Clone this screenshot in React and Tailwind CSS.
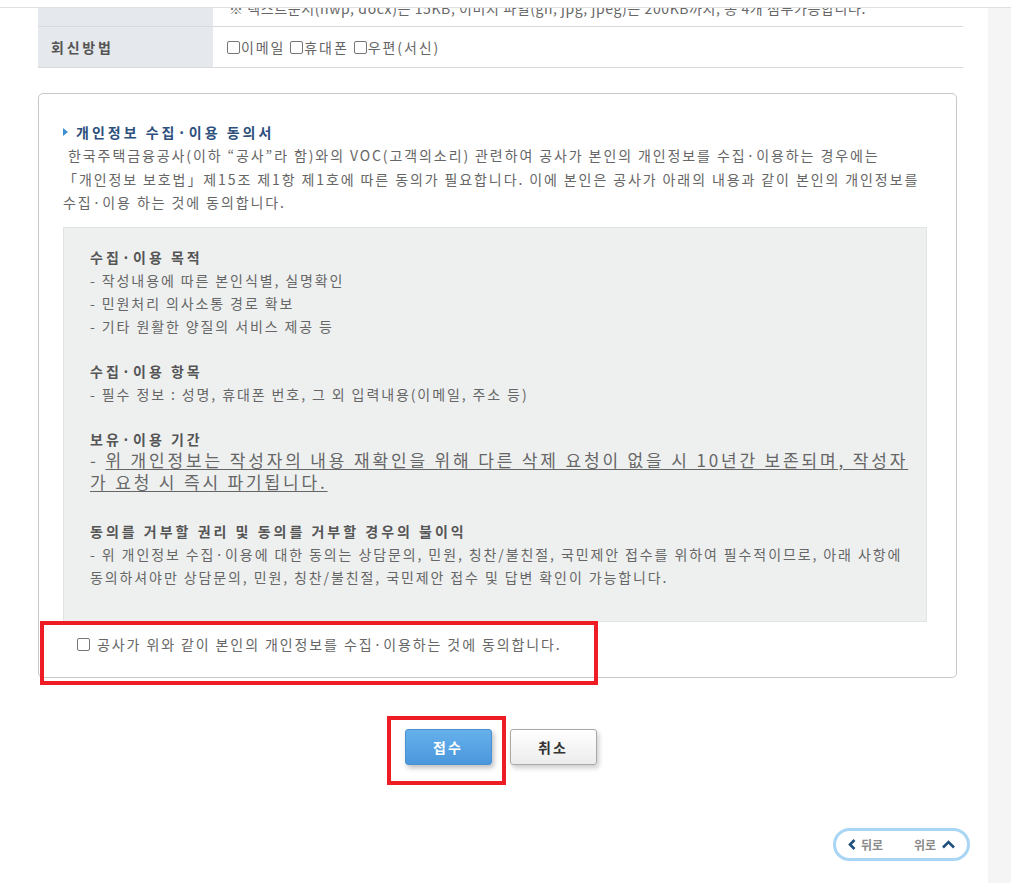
const Box = () => (
  <span className="inline-block h-[13px] w-[13px] shrink-0 rounded-[2px] border border-[#767676] bg-white" />
);

const SECTIONS = [
  {
    title: "수집·이용 목적",
    lines: ["- 작성내용에 따른 본인식별, 실명확인", "- 민원처리 의사소통 경로 확보", "- 기타 원활한 양질의 서비스 제공 등"],
  },
  {
    title: "수집·이용 항목",
    lines: ["- 필수 정보 : 성명, 휴대폰 번호, 그 외 입력내용(이메일, 주소 등)"],
  },
];

export default function App() {
  return (
    <div className="relative h-[883px] w-[1011px] overflow-hidden bg-white font-['Noto_Sans_CJK_KR','Noto_Sans',sans-serif] text-[14px] tracking-[1.9px] text-[#666]">
      <div className="h-[8px] border-b border-[#e0e0e0]" />
      <div className="flex h-[875px]">
        <main className="min-w-0 flex-1 pl-[38px] pr-[25px]">
          {/* ── form table (tail) ─────────────────────── */}
          <div className="flex h-[19px] overflow-hidden border-b border-[#d9d9d9]">
            <div className="w-[175px] shrink-0 bg-[#e5e8ec]" />
            <div className="-mt-[12px] min-w-0 whitespace-nowrap pl-[16px] leading-[24px] tracking-[0.6px]">
              ※ 텍스트문서(hwp, docx)는 15KB, 이미지 파일(gif, jpg, jpeg)는 200KB까지, 총 4개 첨부가능합니다.
            </div>
          </div>
          <div className="flex h-[41px] border-b border-[#d9d9d9]">
            <div className="flex w-[175px] shrink-0 items-center bg-[#e5e8ec] pl-[13px] font-bold tracking-[2.8px] text-[#555]">회신방법</div>
            <div className="flex items-center pl-[14px]">
              <Box /><span className="ml-[1px] mr-[5px]">이메일</span>
              <Box /><span className="ml-[1px] mr-[5px]">휴대폰</span>
              <Box /><span className="ml-[1px]">우편(서신)</span>
            </div>
          </div>

          {/* ── consent box ───────────────────────────── */}
          <div className="mt-[25px] flex h-[585px] w-[919px] flex-col rounded-[5px] border border-[#c8c8c8] px-[24px] pt-[28px]">
            <div className="flex items-center gap-[8px] font-bold leading-[20px] tracking-[3px] text-[#2d4f7c]">
              <svg width="5" height="8" viewBox="0 0 5 8"><path d="M0 0 L5 4 L0 8 Z" fill="#3d8fd1" /></svg>
              개인정보 수집·이용 동의서
            </div>
            <p className="mt-[2px] whitespace-nowrap leading-[23.5px]">
              &nbsp;한국주택금융공사(이하 “공사”라 함)와의 VOC(고객의소리) 관련하여 공사가 본인의 개인정보를 수집·이용하는 경우에는
              <br />
              「개인정보 보호법」제15조 제1항 제1호에 따른 동의가 필요합니다. 이에 본인은 공사가 아래의 내용과 같이 본인의 개인정보를
              <br />
              수집·이용 하는 것에 동의합니다.
            </p>

            <div className="mt-[12px] h-[395px] w-[864px] shrink-0 border border-[#e2e4e4] bg-[#eef0f0] pl-[26px] pt-[18px] leading-[23px]">
              {SECTIONS.map((s, i) => (
                <div key={s.title} className={i ? "mt-[22px]" : ""}>
                  <div className="font-bold tracking-[3px] text-[#555]">{s.title}</div>
                  {s.lines.map((l) => (
                    <div key={l} className="whitespace-nowrap">{l}</div>
                  ))}
                </div>
              ))}
              <div className="mt-[22px]">
                <div className="font-bold tracking-[3px] text-[#555]">보유·이용 기간</div>
                <div className="-mt-[2px] whitespace-nowrap text-[17px] leading-[22px] tracking-[2.85px]">
                  - <span className="underline underline-offset-[2px]">위 개인정보는 작성자의 내용 재확인을 위해 다른 삭제 요청이 없을 시 10년간 보존되며, 작성자</span>
                  <br />
                  <span className="underline underline-offset-[2px]">가 요청 시 즉시 파기됩니다.</span>
                </div>
              </div>
              <div className="mt-[27px]">
                <div className="font-bold tracking-[3px] text-[#555]">동의를 거부할 권리 및 동의를 거부할 경우의 불이익</div>
                <div className="whitespace-nowrap">- 위 개인정보 수집·이용에 대한 동의는 상담문의, 민원, 칭찬/불친절, 국민제안 접수를 위하여 필수적이므로, 아래 사항에</div>
                <div className="whitespace-nowrap">동의하셔야만 상담문의, 민원, 칭찬/불친절, 국민제안 접수 및 답변 확인이 가능합니다.</div>
              </div>
            </div>

            <label className="flex h-[46px] items-center gap-[7px] pl-[14px]">
              <Box />
              <span>공사가 위와 같이 본인의 개인정보를 수집·이용하는 것에 동의합니다.</span>
            </label>
          </div>

          {/* ── buttons ───────────────────────────────── */}
          <div className="mt-[51px] flex justify-center gap-[18px]">
            <button className="h-[36px] w-[87px] rounded-[3px] border border-[#4b91d2] bg-gradient-to-b from-[#66b0ec] to-[#4a97dc] text-[14px] font-bold tracking-[2px] text-white shadow-[2px_3px_5px_rgba(0,0,0,0.25)]">
              접수
            </button>
            <button className="h-[36px] w-[87px] rounded-[3px] border border-[#a9a9a9] bg-gradient-to-b from-white to-[#ececec] text-[14px] font-bold tracking-[2px] text-[#333] shadow-[2px_3px_5px_rgba(0,0,0,0.2)]">
              취소
            </button>
          </div>
        </main>
        <div className="w-[23px] shrink-0 bg-[#f5f5f5]" />
      </div>

      {/* ── annotation overlays ─────────────────────── */}
      <div className="absolute left-[40px] top-[621px] h-[64px] w-[558px] border-4 border-[#ee1c25]" />
      <div className="absolute left-[387px] top-[716px] h-[69px] w-[119px] border-4 border-[#ee1c25]" />

      {/* ── floating back / top ─────────────────────── */}
      <div className="absolute left-[833px] top-[828px] flex h-[33px] w-[137px] items-center justify-between rounded-full border-[3px] border-[#a8d6f4] bg-white px-[12px] text-[12px] font-bold tracking-normal text-[#8a8a8a]">
        <span className="flex items-center gap-[5px]">
          <svg width="8" height="11" viewBox="0 0 8 11"><path d="M6.5 1 L2 5.5 L6.5 10" fill="none" stroke="#1f4f7d" strokeWidth="2.6" /></svg>
          뒤로
        </span>
        <span className="flex items-center gap-[6px]">
          위로
          <svg width="13" height="9" viewBox="0 0 13 9"><path d="M1 7.5 L6.5 2 L12 7.5" fill="none" stroke="#1f4f7d" strokeWidth="2.6" /></svg>
        </span>
      </div>
    </div>
  );
}
